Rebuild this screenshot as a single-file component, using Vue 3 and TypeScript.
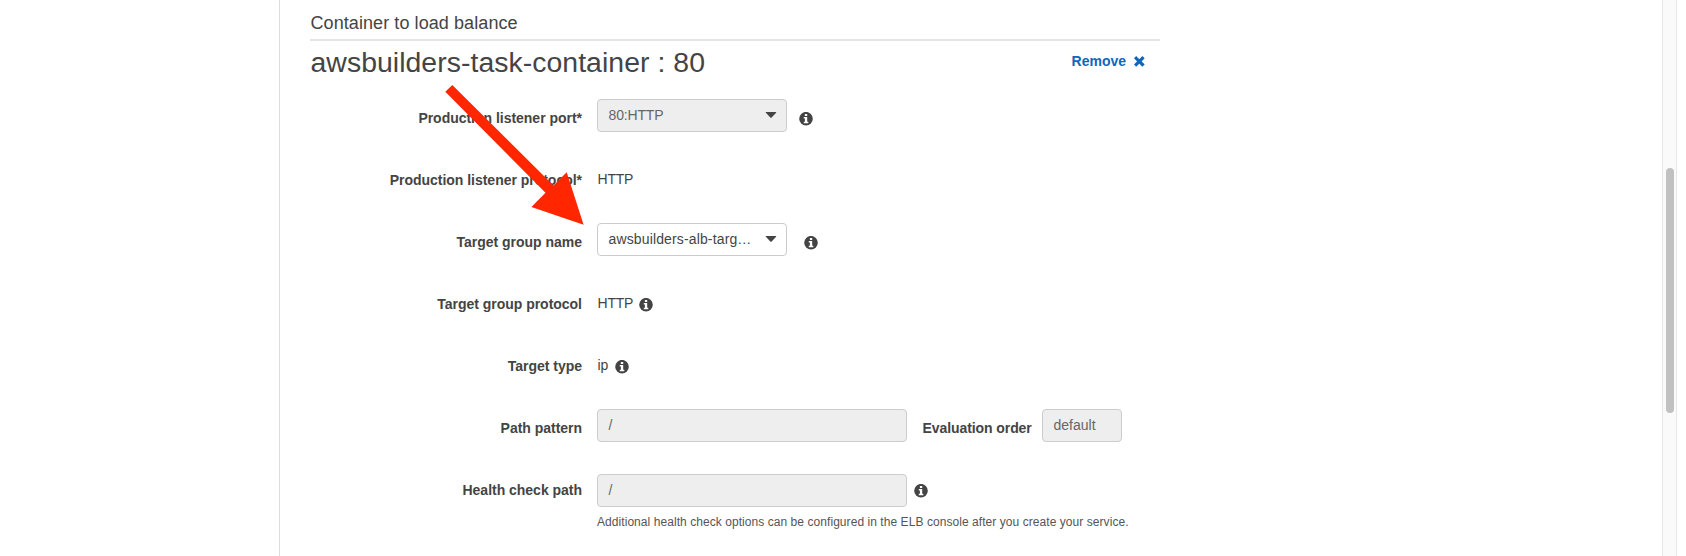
<script setup lang="ts">
import { h } from 'vue'

interface FormRow {
  label: string
  kind: 'select' | 'text' | 'input'
  value: string
  disabled?: boolean
  info?: boolean
  gap?: number
  order?: string
  help?: string
}

const rows: FormRow[] = [
  { label: 'Production listener port*', kind: 'select', value: '80:HTTP', disabled: true, info: true, gap: 12 },
  { label: 'Production listener protocol*', kind: 'text', value: 'HTTP' },
  { label: 'Target group name', kind: 'select', value: 'awsbuilders-alb-targ…', info: true, gap: 17 },
  { label: 'Target group protocol', kind: 'text', value: 'HTTP', info: true, gap: 6 },
  { label: 'Target type', kind: 'text', value: 'ip', info: true, gap: 7 },
  { label: 'Path pattern', kind: 'input', value: '/', disabled: true, order: 'default' },
  {
    label: 'Health check path',
    kind: 'input',
    value: '/',
    disabled: true,
    info: true,
    gap: 7,
    help: 'Additional health check options can be configured in the ELB console after you create your service.',
  },
]

const InfoIcon = () =>
  h('svg', { width: 14, height: 14, viewBox: '0 0 14 14', role: 'img', 'aria-label': 'Info' }, [
    h('circle', { cx: 7, cy: 6.7, r: 6.8, fill: '#444' }),
    h('path', { d: 'M5.900 2h2.300v2H5.900zM4.800 5h3.400v4.700h1.100v1.600H4.800V9.700h1.100V6.600H4.800z', fill: '#fff' }),
  ])
</script>

<template>
  <div class="page">
    <main class="panel">
      <h3 class="section-title">Container to load balance</h3>
      <header class="container-head">
        <h2 class="container-name">awsbuilders-task-container : 80</h2>
        <a class="remove">
          <span>Remove</span>
          <svg width="11" height="11" viewBox="0 0 11 11">
            <path d="M2.200 2.300l6.200 6.200M8.400 2.300l-6.200 6.200" stroke="#1166bb" stroke-width="3.200" stroke-linecap="square" />
          </svg>
        </a>
      </header>
      <div class="form">
        <div v-for="row in rows" :key="row.label" class="row" :class="{ 'has-help': row.help }">
          <label class="label">{{ row.label }}</label>
          <div v-if="row.kind === 'select'" class="field select" :class="{ disabled: row.disabled }">
            <span>{{ row.value }}</span>
            <svg width="12" height="6" viewBox="0 0 12 6">
              <path d="M1.200 0h9.600q.9 0 .3.700L6.700 5.400q-.7.700-1.400 0L.9.700Q.3 0 1.200 0z" fill="#444" />
            </svg>
          </div>
          <div v-else-if="row.kind === 'input'" class="field input disabled">{{ row.value }}</div>
          <span v-else class="value">{{ row.value }}</span>
          <span v-if="row.info" class="info" :style="{ marginLeft: row.gap + 'px' }"><InfoIcon /></span>
          <template v-if="row.order">
            <label class="order-label">Evaluation order</label>
            <div class="field order disabled">{{ row.order }}</div>
          </template>
          <p v-if="row.help" class="help">{{ row.help }}</p>
        </div>
      </div>
      <svg class="arrow" width="140" height="142" viewBox="445 84 140 142">
        <path d="M445.300 91.800L452.300 85L553.500 185.600L566.700 172.200L583.600 224.800L531.400 207L545.500 192.700z" fill="#ff2600" />
      </svg>
    </main>
    <aside class="scrollbar"><div class="thumb"></div></aside>
  </div>
</template>

<style scoped>
.page {
  display: flex;
  justify-content: space-between;
  box-sizing: border-box;
  height: 556px;
  padding-left: 279px;
  padding-right: 9px;
  overflow: hidden;
  background: #fff;
  color: #444;
  font: 14px "Liberation Sans", Arial, sans-serif;
}
.panel {
  position: relative;
  width: 881px;
  box-sizing: border-box;
  padding-left: 30px;
  border-left: 1px solid #ddd;
  white-space: nowrap;
}
.section-title {
  box-sizing: border-box;
  height: 41px;
  margin: 0;
  padding-top: 13px;
  border-bottom: 2px solid #e5e5e5;
  font-size: 18px;
  line-height: 21px;
  font-weight: 400;
  letter-spacing: 0.08px;
  text-indent: 0.5px;
}
.container-head {
  display: flex;
  justify-content: space-between;
  height: 43px;
  padding-right: 14px;
}
.container-name {
  margin: 6px 0 0;
  font-size: 28.4px;
  line-height: 31px;
  font-weight: 400;
  letter-spacing: 0.05px;
  text-indent: 0.5px;
}
.remove {
  display: flex;
  align-items: center;
  gap: 8px;
  height: 20px;
  padding-right: 1px;
  margin-top: 10px;
  color: #1166bb;
  font-weight: 700;
}
.row {
  position: relative;
  display: flex;
  align-items: center;
  height: 62px;
}
.label {
  width: 272px;
  margin-right: 15px;
  padding-top: 5px;
  text-align: right;
  font-weight: 700;
  letter-spacing: -0.02px;
}
.field {
  display: flex;
  align-items: center;
  justify-content: space-between;
  box-sizing: border-box;
  height: 33px;
  padding: 0 9px 0 10.5px;
  border: 1px solid #ccc;
  border-radius: 4px;
  background: #fff;
}
.field.disabled {
  background: #eee;
  color: #666;
}
.select {
  width: 190px;
}
.select span {
  letter-spacing: 0.14px;
}
.select.disabled span {
  letter-spacing: -0.15px;
}
.input {
  width: 310px;
}
.order {
  width: 80px;
}
.value {
  padding-top: 3px;
  letter-spacing: -0.2px;
  text-indent: 0.5px;
}
.info {
  display: flex;
  padding-top: 7px;
}
.order-label {
  width: 119.5px;
  margin-left: 15.5px;
  padding-top: 5px;
  font-weight: 700;
  letter-spacing: -0.08px;
}
.has-help .field {
  margin-top: 6px;
}
.help {
  position: absolute;
  left: 287px;
  top: 58px;
  margin: 0;
  color: #555;
  font-size: 12px;
  line-height: 16px;
  letter-spacing: 0.06px;
}
.arrow {
  position: absolute;
  left: 165px;
  top: 84px;
}
.scrollbar {
  box-sizing: border-box;
  width: 15px;
  height: 100%;
  padding: 168px 2px 0 3px;
  border: solid #e7e7e7;
  border-width: 0 1px;
  background: #fafafa;
}
.thumb {
  height: 245px;
  width: 8px;
  border-radius: 4px;
  background: #c1c1c1;
}
</style>
